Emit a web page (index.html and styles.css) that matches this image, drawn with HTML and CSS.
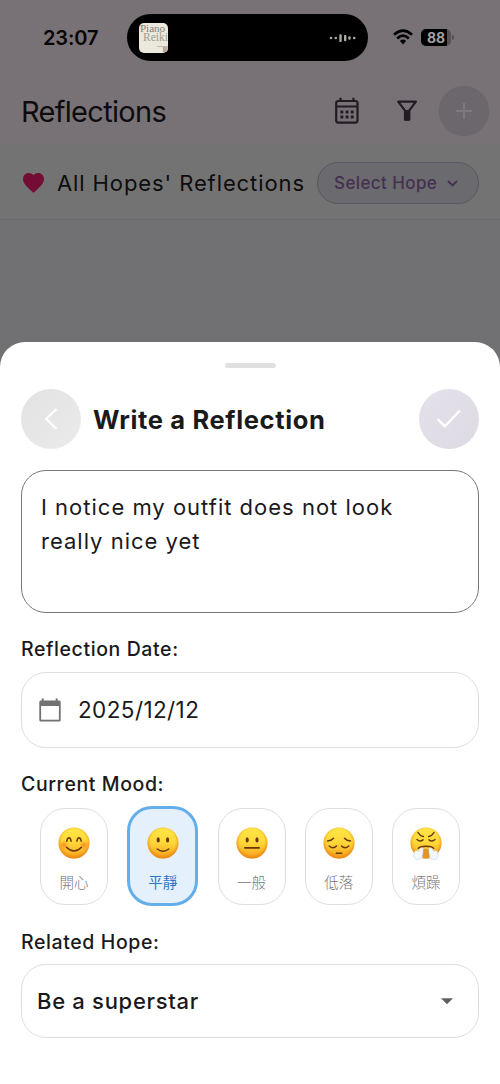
FILE: index.html
```html
<!DOCTYPE html>
<html lang="en">
<head>
<meta charset="utf-8">
<title>Reflections</title>
<link rel="stylesheet" href="styles.css">
</head>
<body>
<div class="screen">
  <div class="status-bar">
    <span class="clock">23:07</span>
    <div class="island">
      <div class="album"><span class="album-a">Piano</span><span class="album-b">Reiki</span><span class="album-mark"></span></div>
      <svg class="wave" width="28" height="12" viewBox="0 0 28 12" fill="#aaa89f"><circle cx="2" cy="6" r="1.3"/><circle cx="6.8" cy="6" r="1.3"/><rect x="10.3" y="2.2" width="2.4" height="7.8" rx=".8"/><rect x="15" y="3" width="2.4" height="6.3" rx=".8"/><rect x="19.3" y="4.2" width="2.4" height="3.6" rx="1"/><circle cx="25.2" cy="6" r="1.3"/></svg>
    </div>
    <svg class="wifi" width="20" height="16" viewBox="0 0 20 16" fill="none" stroke="#000" stroke-width="2.7"><path d="M1 5.7Q10-2.3 19 5.7"/><path d="M4.2 9.4Q10 4 15.8 9.4"/><path d="M6.9 12Q10 9.2 13.1 12L10 15.4Z" fill="#000" stroke="none"/></svg>
    <div class="battery"><span class="battery-body">88</span><span class="battery-tip"></span></div>
  </div>

  <header class="app-bar">
    <h1 class="app-title">Reflections</h1>
    <svg class="calendar" width="24" height="27" viewBox="0 0 24 27" fill="none" stroke="#211c22" stroke-width="2.2"><rect x="1.2" y="4" width="21.3" height="21.6" rx="2"/><path d="M1.2 9.5H22.5M5.5.8V4M18.4.8V4"/><path d="M5.4 15H18.8M5.4 20H18.8" stroke-width="2.8" stroke-dasharray="2.9 2.3"/></svg>
    <svg class="filter" width="20" height="22" viewBox="0 0 20 22" fill="none" stroke="#211c22" stroke-width="2.2" stroke-linejoin="round"><path d="M1.2 1.7H18.9L12.2 10.7V19.7H8V10.7Z"/><path d="M8.2 11H12V19.5H8.2Z" fill="#211c22"/></svg>
    <button class="add-button" aria-label="Add"><svg width="16" height="16" viewBox="0 0 16 16" stroke="#7d797e" stroke-width="2"><path d="M8 0V16M0 8H16"/></svg></button>
  </header>

  <div class="hope-bar">
    <svg class="heart" width="21" height="20" viewBox="0 0 21 20" fill="#740d36"><path d="M10.5 19.7L9 18.4C3.6 13.5 0 10.3 0 5.9C0 2.5 2.6 0 5.9 0C7.7 0 9.4.8 10.5 2.2C11.6.8 13.3 0 15.1 0C18.4 0 21 2.5 21 5.9C21 10.3 17.4 13.5 12 18.4Z"/></svg>
    <span class="hope-title">All Hopes' Reflections</span>
    <button class="select-hope"><span class="select-text">Select Hope</span><svg width="11" height="7" viewBox="0 0 11 7" fill="none" stroke="#44304f" stroke-width="1.8"><path d="M1 1L5.5 5.5L10 1"/></svg></button>
  </div>

  <section class="sheet">
    <div class="handle"></div>
    <div class="sheet-header">
      <button class="round back" aria-label="Back"><svg width="14" height="22" viewBox="0 0 14 22" fill="none" stroke="#fff" stroke-width="2.3"><path d="M12.5 1L2.3 11L12.5 21"/></svg></button>
      <h2 class="sheet-title">Write a Reflection</h2>
      <button class="round done" aria-label="Done"><svg width="26" height="20" viewBox="0 0 26 20" fill="none" stroke="#fff" stroke-width="2.5"><path d="M1.7 10.2L8.8 17.3L24 1.5"/></svg></button>
    </div>

    <div class="note">I notice my outfit does not look really nice yet</div>

    <div class="label label-date">Reflection Date:</div>
    <div class="field date-field">
      <svg width="22" height="24" viewBox="0 0 22 24"><path d="M2.7.5H4.7V2.5H16.7V.5H18.7V2.5H20.2Q21.7 2.5 21.7 4V22Q21.7 23.5 20.2 23.5H1.8Q.3 23.5.3 22V4Q.3 2.5 1.8 2.5H2.7Z" fill="#727272"/><path d="M2.1 8H19.9V21.7H2.1Z" fill="#fff"/></svg>
      <span class="date-text">2025/12/12</span>
    </div>

    <div class="label label-mood">Current Mood:</div>
    <svg class="defs" width="0" height="0" aria-hidden="true">
      <defs>
        <linearGradient id="face" x1="0" y1="0" x2="0" y2="1"><stop offset="0" stop-color="#ffe747"/><stop offset=".5" stop-color="#ffd638"/><stop offset="1" stop-color="#f6a01c"/></linearGradient>
        <radialGradient id="rim" cx=".5" cy=".45" r=".55"><stop offset=".72" stop-color="#ef8a12" stop-opacity="0"/><stop offset="1" stop-color="#e77d0c" stop-opacity=".8"/></radialGradient>
        <radialGradient id="blush"><stop offset="0" stop-color="#ff6c20" stop-opacity=".75"/><stop offset="1" stop-color="#ff8c20" stop-opacity="0"/></radialGradient>
      </defs>
    </svg>
    <div class="moods">
      <div class="mood">
        <svg class="emoji" width="32" height="32" viewBox="0 0 32 32"><circle cx="16" cy="16" r="15.5" fill="url(#face)"/><circle cx="16" cy="16" r="15.5" fill="url(#rim)"/><circle cx="6" cy="18" r="5" fill="url(#blush)"/><circle cx="26" cy="18" r="5" fill="url(#blush)"/><g fill="none" stroke="#67380c" stroke-width="1.5" stroke-linecap="round"><path d="M8.8 14.2Q9.4 10.8 11 10.8Q12.5 10.8 13.1 14.2M18.9 14.2Q19.5 10.8 21 10.8Q22.6 10.8 23.2 14.2M8.5 20.2Q16 27.8 23.5 20.2"/></g></svg>
        <span>開心</span>
      </div>
      <div class="mood selected">
        <svg class="emoji" width="32" height="32" viewBox="0 0 32 32"><circle cx="16" cy="16" r="15.5" fill="url(#face)"/><circle cx="16" cy="16" r="15.5" fill="url(#rim)"/><g fill="#67380c"><ellipse cx="11.2" cy="12.9" rx="1.6" ry="2.6"/><ellipse cx="20.6" cy="12.9" rx="1.6" ry="2.6"/></g><path d="M10.2 22Q16 26.3 21.8 22" fill="none" stroke="#67380c" stroke-width="1.5" stroke-linecap="round"/></svg>
        <span>平靜</span>
      </div>
      <div class="mood">
        <svg class="emoji" width="32" height="32" viewBox="0 0 32 32"><circle cx="16" cy="16" r="15.5" fill="url(#face)"/><circle cx="16" cy="16" r="15.5" fill="url(#rim)"/><g fill="#67380c"><ellipse cx="11.2" cy="12.9" rx="1.6" ry="2.6"/><ellipse cx="21" cy="12.9" rx="1.6" ry="2.6"/><rect x="8" y="20" width="16" height="1.7" rx=".8"/></g></svg>
        <span>一般</span>
      </div>
      <div class="mood">
        <svg class="emoji" width="32" height="32" viewBox="0 0 32 32"><circle cx="16" cy="16" r="15.5" fill="url(#face)"/><circle cx="16" cy="16" r="15.5" fill="url(#rim)"/><g fill="none" stroke="#67380c" stroke-width="1.5" stroke-linecap="round"><path d="M4.5 14Q8.5 13.8 10.5 11.3M21.5 11.3Q23.5 13.8 27.5 14M6.2 19Q10 22.5 13.5 19M18.5 19Q22 22.5 25.8 19M13.3 26.2H18.7"/></g></svg>
        <span>低落</span>
      </div>
      <div class="mood">
        <svg class="emoji" width="32" height="34" viewBox="0 0 32 34"><circle cx="16" cy="16" r="15.5" fill="url(#face)"/><circle cx="16" cy="16" r="15.5" fill="url(#rim)"/><path d="M12 22H20V31H12Z" fill="#e5961f"/><g fill="none" stroke="#67380c" stroke-width="1.5" stroke-linecap="round"><path d="M8 5.5Q9.5 8.5 13.3 9.5M24 5.5Q22.5 8.5 18.7 9.5M7 12.5Q10 15.3 13 12.8M19 12.8Q22 15.3 25 12.5M8.3 21.3Q10.5 19.3 16 19.3Q21.5 19.3 23.7 21.3"/></g><path d="M12.2 20.8C9.8 20.8 8.8 22.8 8.5 24.2C6 23 3.8 24.2 4.2 26.7C2.7 27.6 3.2 30 5 30.5C5 32.8 8 33.5 9.3 32C12 32 13.1 30.4 12.2 28.7C13.5 26 12.7 23.5 13.3 21.5ZM19.8 20.8C22.2 20.8 23.2 22.8 23.5 24.2C26 23 28.2 24.2 27.8 26.7C29.3 27.6 28.8 30 27 30.5C27 32.8 24 33.5 22.7 32C20 32 18.9 30.4 19.8 28.7C18.5 26 19.3 23.5 18.7 21.5Z" fill="#f4f8fd" stroke="#bed3ed" stroke-width=".6"/></svg>
        <span>煩躁</span>
      </div>
    </div>

    <div class="label label-hope">Related Hope:</div>
    <div class="field hope-field"><span class="hope-text">Be a superstar</span><svg width="12" height="7" viewBox="0 0 12 7"><path d="M0 .3H12L6 6.3Z" fill="#626064"/></svg></div>
  </section>
</div>
</body>
</html>
```
FILE: styles.css
```css
* { box-sizing: border-box; }
body { margin: 0; font-family: Inter, "Noto Sans CJK TC", sans-serif; }
button { border: 0; padding: 0; font: inherit; }
h1, h2 { margin: 0; }
svg { display: block; flex: none; }
span, h1, h2 { white-space: nowrap; }

.screen { position: relative; width: 500px; height: 1084px; overflow: hidden; background: #717173; }

.status-bar { display: flex; align-items: center; height: 75px; background: #787276; }
.clock { width: 84px; margin-left: 43px; font-size: 20px; font-weight: 600; letter-spacing: -.1px; color: #050505; }
.island { display: flex; align-items: center; justify-content: space-between; width: 241px; height: 47px; padding: 0 11px 0 12px; border-radius: 24px; background: #000; }
.album { display: flex; flex-direction: column; width: 29px; height: 30px; overflow: hidden; border-radius: 5px; background: #ebe8dc; color: #858278; font-family: "Liberation Serif", serif; line-height: 9px; }
.album-a { padding: 1px 0 0 1px; font-size: 11px; }
.album-b { padding-left: 4px; font-size: 11.5px; color: #a19e93; }
.album-mark { align-self: flex-end; width: 11px; height: 6px; margin-top: 4px; border-top: 1px solid #c9b8aa; background: linear-gradient(90deg, transparent 6px, #b29c90 6px, #ccb9ae); }
.wifi { margin-left: 25px; margin-top: -2px; }
.battery { display: flex; align-items: center; gap: 1px; margin-left: 8px; }
.battery-body { width: 30px; height: 17px; border-radius: 5px; background: linear-gradient(90deg, #000 26px, #565155 26px); color: #a4a0a2; font-size: 14px; font-weight: 700; line-height: 17px; padding-left: 6px; }
.battery-tip { width: 2px; height: 5px; border-radius: 0 2px 2px 0; background: #555053; }

.app-bar { display: flex; align-items: center; height: 72px; padding: 0 11px 0 21px; background: linear-gradient(#787276 68px, #737373); }
.app-title { width: 314px; font-size: 29px; font-weight: 400; letter-spacing: -0.7px; color: #0d0b0e; }
.calendar { margin-top: -1px; }
.filter { margin-left: 38px; }
.add-button { display: grid; place-items: center; width: 50px; height: 50px; margin-left: auto; border-radius: 50%; background: #6c676c; box-shadow: 0 0 1px #6f696e; }

.hope-bar { display: flex; align-items: center; height: 73px; padding: 0 21px 0 22px; border-bottom: 1px solid #6b6b6c; background: #737373; }
.heart { margin-left: 1px; }
.hope-title { width: 260px; margin: -1px 0 0 13px; font-size: 22px; font-weight: 400; letter-spacing: .9px; color: #0d0d0e; }
.select-hope { display: flex; align-items: center; justify-content: space-between; width: 162px; height: 42px; padding: 0 20px 0 16px; border: 1px solid #5b5663; border-radius: 21px; background: #6b6a6e; }
.select-text { color: #44304f; font-size: 17px; font-weight: 500; letter-spacing: .4px; }

.sheet { position: absolute; inset: 342px 0 0; padding: 0 21px; border-radius: 25px 25px 0 0; background: #fff; color: #1a191c; }
.handle { width: 51px; height: 5px; margin: 21px auto 0; border-radius: 3px; background: #e0e0e0; }
.sheet-header { display: flex; align-items: center; height: 60px; margin-top: 21px; }
.round { display: grid; place-items: center; width: 60px; height: 60px; border-radius: 50%; }
.back { background: linear-gradient(135deg, #e2e2e2, #ebebeb); }
.done { margin-left: auto; background: linear-gradient(135deg, #e5e1ea, #dedae3); }
.sheet-title { margin: 1px 0 0 12px; font-size: 25.5px; font-weight: 700; letter-spacing: .65px; }
.note { height: 143px; margin-top: 21px; padding: 19px 19px; border: 1px solid #777578; border-radius: 25px; font-size: 22px; line-height: 34px; letter-spacing: 1px; }
.label { height: 24px; font-size: 19.5px; font-weight: 500; line-height: 26px; letter-spacing: .6px; }
.label-date { margin-top: 23px; }
.label-mood { margin-top: 23px; }
.label-hope { margin-top: 23px; }
.field { display: flex; align-items: center; border: 1px solid #dedede; border-radius: 25px; }
.date-field { height: 76px; margin-top: 12px; padding-left: 17px; }
.date-text { margin: -1px 0 0 17px; font-size: 22.5px; letter-spacing: .4px; }
.hope-field { height: 74px; margin-top: 11px; padding: 0 25px 0 15px; justify-content: space-between; }
.hope-text { font-size: 22px; font-weight: 500; letter-spacing: .7px; }
.defs { position: absolute; }

.moods { display: flex; align-items: center; justify-content: space-between; height: 100px; margin-top: 11px; padding: 0 19px 0 19px; }
.mood { display: flex; flex-direction: column; align-items: center; width: 68px; height: 97px; padding-top: 18px; border: 1px solid #dedede; border-radius: 25px; color: #777; font-family: "Noto Sans CJK TC", sans-serif; font-size: 14.5px; font-weight: 300; }
.mood span { margin-top: auto; padding-bottom: 11px; line-height: 22px; }
.emoji { margin-bottom: -3px; }
.selected { width: 71px; height: 100px; padding-top: 18px; border: 3px solid #64afe9; background: #e4f1fc; color: #2878c8; font-weight: 400; }
.selected span { padding-bottom: 10px; }
```
